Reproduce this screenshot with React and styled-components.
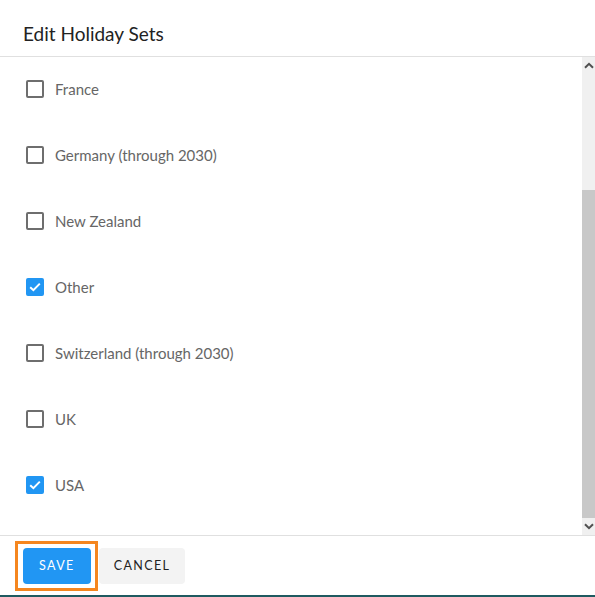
import React from "react";
import styled, { createGlobalStyle } from "styled-components";

const Global = createGlobalStyle`
  html, body { margin: 0; padding: 0; background: #fff; }
  body { font-family: Lato, "Liberation Sans", sans-serif; }
`;

const Dialog = styled.div`
  width: 595px;
  height: 597px;
  display: flex;
  flex-direction: column;
  background: #fff;
  border-bottom: 2px solid #1f5a60;
  box-sizing: border-box;
`;

const Header = styled.div`
  height: 57px;
  display: flex;
  align-items: center;
  padding-left: 23px;
  padding-top: 10px;
  box-sizing: border-box;
  border-bottom: 1px solid #e0e0e0;
  font-size: 19px;
  color: #222;
`;

const Body = styled.div`
  height: 478px;
  display: flex;
  border-bottom: 1px solid #e0e0e0;
`;

const List = styled.div`
  flex: 1;
  display: flex;
  flex-direction: column;
  margin-top: -1px;
`;

const Row = styled.label`
  height: 66px;
  display: flex;
  align-items: center;
  padding-left: 26px;
  gap: 11px;
  font-size: 15px;
  color: #666;
`;

const Box = styled.span`
  width: 18px;
  height: 18px;
  box-sizing: border-box;
  border-radius: 2px;
  border: 2px solid ${(p) => (p.$checked ? "#2196f3" : "#6e6e6e")};
  background: ${(p) => (p.$checked ? "#2196f3" : "#fff")};
  display: flex;
  align-items: center;
  justify-content: center;
`;

const Scrollbar = styled.div`
  width: 13px;
  background: #f0f0f0;
  display: flex;
  flex-direction: column;
`;

const Arrow = styled.div`
  height: 17px;
  display: flex;
  align-items: center;
  justify-content: center;
`;

const Track = styled.div`
  flex: 1;
  display: flex;
  flex-direction: column;
  justify-content: flex-end;
`;

const Thumb = styled.div`
  height: 328px;
  background: #c8c8c8;
`;

const Footer = styled.div`
  flex: 1;
  display: flex;
  align-items: center;
  padding-left: 15px;
  gap: 1px;
`;

const Focus = styled.div`
  border: 3px solid #f5861f;
  padding: 4px 4px 4px 5px;
  display: flex;
`;

const Button = styled.button`
  height: 36px;
  border: none;
  border-radius: 4px;
  padding: 0 ${(p) => (p.$primary ? "16px" : "15px")};
  background: ${(p) => (p.$primary ? "#2196f3" : "#f3f3f3")};
  color: ${(p) => (p.$primary ? "#fff" : "#222")};
  font-family: Lato, "Liberation Sans", sans-serif;
  font-size: 12.5px;
  font-weight: 400;
  letter-spacing: 1.4px;
  cursor: pointer;
`;

const items = [
  ["France", false],
  ["Germany (through 2030)", false],
  ["New Zealand", false],
  ["Other", true],
  ["Switzerland (through 2030)", false],
  ["UK", false],
  ["USA", true],
];

const Check = () => (
  <svg width="12" height="10" viewBox="0 0 12 10">
    <path d="M1.2 5.2 L4.4 8.2 L10.8 1.6" fill="none" stroke="#fff" strokeWidth="2" />
  </svg>
);

const Chevron = ({ up }) => (
  <svg width="10" height="7" viewBox="0 0 10 7">
    <path
      d={up ? "M1 5.8 L5 1.8 L9 5.8" : "M1 1.2 L5 5.2 L9 1.2"}
      fill="none"
      stroke="#505050"
      strokeWidth="2"
    />
  </svg>
);

export default function App() {
  return (
    <>
      <Global />
      <Dialog>
        <Header>Edit Holiday Sets</Header>
        <Body>
          <List>
            {items.map(([name, checked]) => (
              <Row key={name}>
                <Box $checked={checked}>{checked && <Check />}</Box>
                {name}
              </Row>
            ))}
          </List>
          <Scrollbar>
            <Arrow>
              <Chevron up />
            </Arrow>
            <Track>
              <Thumb />
            </Track>
            <Arrow>
              <Chevron />
            </Arrow>
          </Scrollbar>
        </Body>
        <Footer>
          <Focus>
            <Button $primary>SAVE</Button>
          </Focus>
          <Button>CANCEL</Button>
        </Footer>
      </Dialog>
    </>
  );
}
